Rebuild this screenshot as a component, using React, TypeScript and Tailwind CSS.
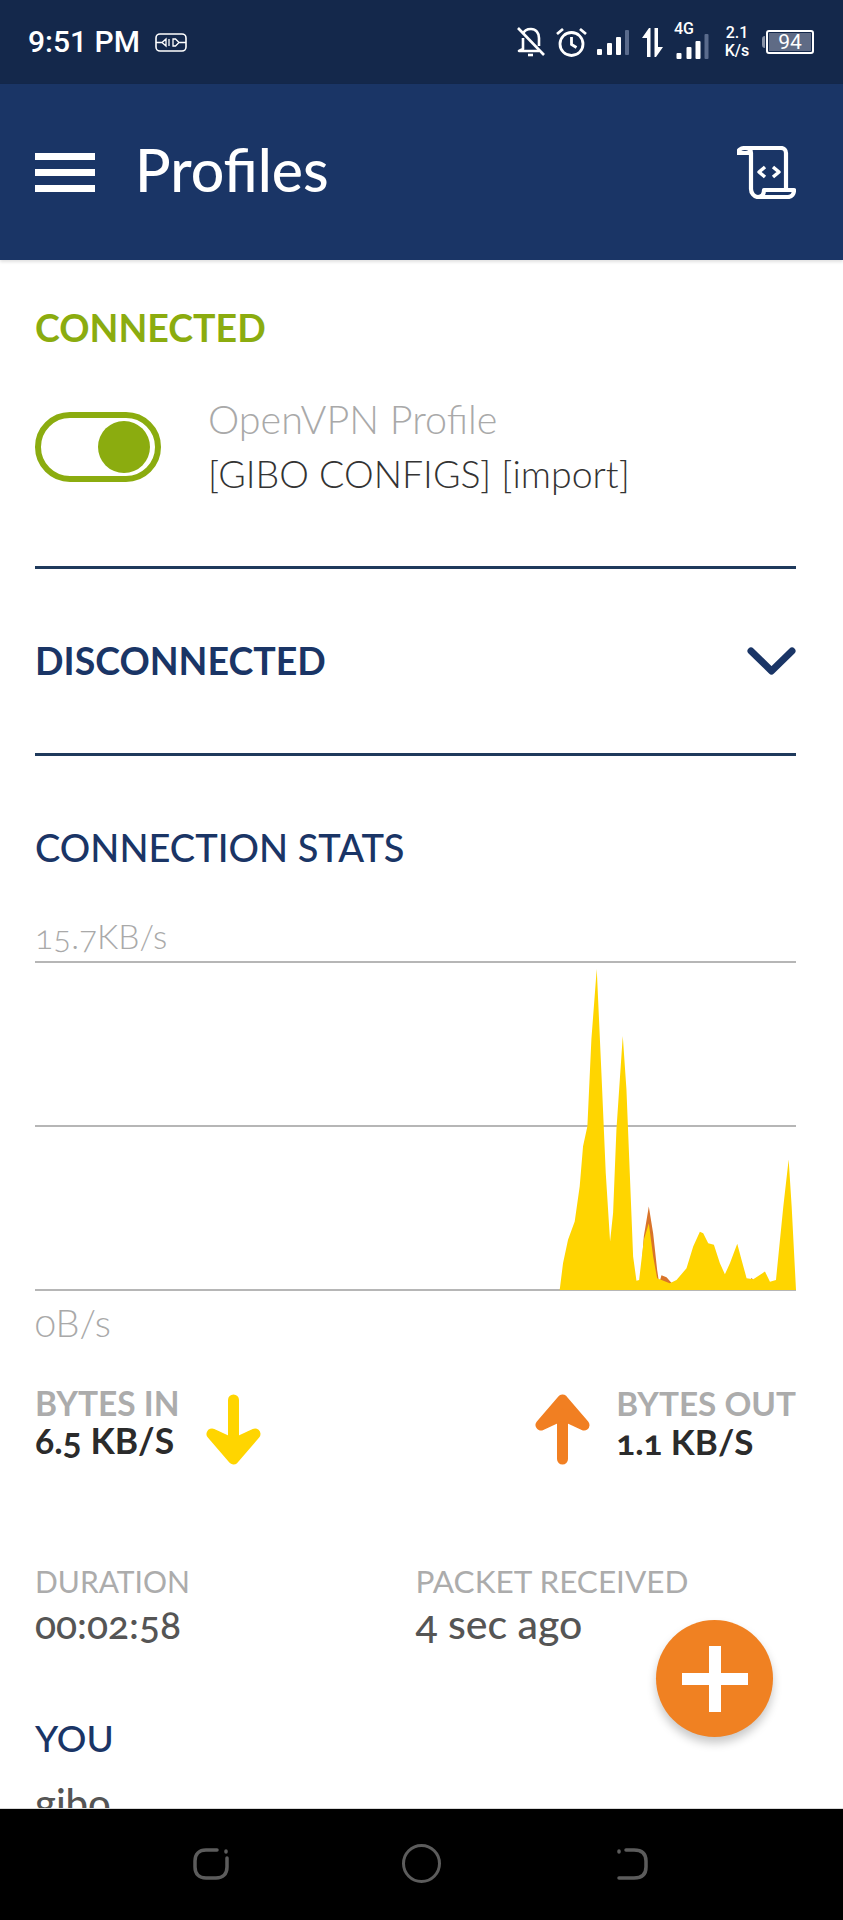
const yellowPts = '120,1050 130,970 145,900 165,845 180,740 190,620 203,560 215,300 231,90 245,400 258,700 271,905 280,820 290,570 309,290 320,450 330,700 340,950 350,1022 358,1020 372,900 387,850 400,950 412,1015 425,1020 450,1030 470,1020 500,985 520,920 540,876 550,880 565,910 582,915 600,970 615,1003 630,970 652,912 665,960 680,1015 700,1018 735,995 750,1025 768,1020 790,800 806,660 815,800 828,1050'
const orangePts = '362,1030 372,890 387,800 400,880 412,990 418,1030 425,1006 440,1012 458,1032 680,1030 685,1028 695,1014 710,1030 362,1040'

function SignalBars({ className }: { className?: string }) {
  return (
    <svg viewBox="0 0 32 25" className={className} fill="#fff">
      <rect x="0" y="19" width="5" height="6" rx="1" />
      <rect x="10" y="13" width="5" height="12" rx="1" />
      <rect x="19" y="7" width="5" height="18" rx="1" />
      <rect x="28" y="0" width="4" height="25" rx="1" fill="#5a6b8c" />
    </svg>
  )
}

function StatusBar() {
  return (
    <div className="h-[84px] shrink-0 bg-[#14284b] flex items-center pl-[28px] pr-[29px] text-white font-['Roboto',sans-serif]">
      <span className="text-[30px] leading-none font-medium">9:51 PM</span>
      <svg viewBox="0 0 32 19" className="w-[32px] h-[19px] ml-[15px]" fill="none" stroke="#fff" strokeWidth="1.6">
        <rect x="1" y="1" width="30" height="17" rx="4" />
        <path d="M1 9.5h6l4-3.500v7l-4-3.500M14 6v7M18 6h2.500l3.500 3.500-3.500 3.500H18zM24 9.500h7" strokeWidth="1.300" />
      </svg>
      <div className="ml-auto flex items-center">
        <svg viewBox="0 0 28 30" className="w-[28px] h-[30px]" fill="none" stroke="#fff" strokeWidth="2.600">
          <path d="M6 7C7 4 10 2 14 2c5 0 8 4 8 9v8M6 11v11l-4 2h20" strokeLinejoin="round" />
          <path d="M1 1l26 27" />
          <path d="M11 28h5" />
        </svg>
        <svg viewBox="0 0 33 30" className="w-[33px] h-[30px] ml-[10px]" fill="none" stroke="#fff" strokeWidth="2.800">
          <circle cx="16.500" cy="17" r="11.500" />
          <path d="M16.500 10v7.500l5 3M2 7l6-5M31 7l-6-5" />
        </svg>
        <SignalBars className="w-[32px] h-[25px] ml-[9px]" />
        <svg viewBox="0 0 21 29" className="w-[21px] h-[29px] ml-[13px]" fill="#fff">
          <path d="M0 10L7 0h1.500v29H5V10z" />
          <path d="M21 19L14 29h-1.500V0H16v19z" />
        </svg>
        <div className="relative w-[36px] h-[33px] ml-[10px] flex items-end justify-end">
          <span className="absolute left-[1px] top-[-5px] text-[16px] leading-none font-medium">4G</span>
          <SignalBars className="w-[33px] h-[25px]" />
        </div>
        <div className="w-[26px] ml-[15px] flex flex-col items-center text-[16px] leading-[18px] font-medium">
          <span>2.1</span>
          <span>K/s</span>
        </div>
        <div className="flex items-center ml-[12px]">
          <div className="w-[3px] h-[12px] bg-[#8a94a8] rounded-l-sm mr-[1px]" />
          <div className="w-[48px] h-[24px] border-2 border-white rounded-[3px] p-[1px] flex">
            <div className="w-full bg-[#5f6b85] flex items-center justify-center text-[21px] leading-none">94</div>
          </div>
        </div>
      </div>
    </div>
  )
}

function Header() {
  return (
    <div className="h-[176px] shrink-0 bg-[#1a3566] flex items-center pl-[35px] pr-[47px] text-white shadow-[0_2px_3px_rgba(0,0,0,0.12)] z-10">
      <div className="w-[60px] flex flex-col gap-[9px]">
        <div className="h-[7px] bg-white" />
        <div className="h-[7px] bg-white" />
        <div className="h-[7px] bg-white" />
      </div>
      <h1 className="ml-[40px] pb-[5px] text-[59px] leading-none font-medium font-['Lato',sans-serif]">Profiles</h1>
      <svg viewBox="0 0 59 53" className="ml-auto w-[59px] h-[53px]" fill="none" stroke="#fff" strokeWidth="4.200" strokeLinejoin="round">
        <path d="M8 2h36c3 0 5 2 5 5v35" />
        <path d="M1 7c0-3 3-5 7-5s6 2 6 5zM14 7v36c0 4 3 8 7 8h30c4 0 6-3 6-7H27c0 4-2 7-6 7" />
        <path d="M28 21l-6 5 6 5M36 21l6 5-6 5" strokeWidth="3.500" />
      </svg>
    </div>
  )
}

function Chart() {
  return (
    <div className="relative h-[330px] mt-[5px] flex flex-col justify-between">
      <div className="h-[2px] bg-[#b6b6b6]" />
      <div className="h-[2px] bg-[#b6b6b6]" />
      <div className="h-[2px] bg-[#b6b6b6]" />
      <svg viewBox="-1452 69 2280 981" preserveAspectRatio="none" className="absolute left-0 top-[1px] w-[761px] h-[328px]">
        <polygon points={orangePts} fill="#d9742a" />
        <polygon points={yellowPts} fill="#ffd500" />
      </svg>
    </div>
  )
}

function DownArrow() {
  return (
    <svg viewBox="0 0 57 71" className="w-[57px] h-[71px] ml-[25px] mt-[11px]" fill="#ffd500" stroke="#ffd500" strokeWidth="11" strokeLinecap="round" strokeLinejoin="round">
      <path d="M28.500 6v50" />
      <path d="M7 40l21.500 25L50 40 28.500 50z" />
    </svg>
  )
}

function UpArrow() {
  return (
    <svg viewBox="0 0 57 71" className="w-[57px] h-[71px] ml-auto mt-[11px]" fill="#f17f22" stroke="#f17f22" strokeWidth="11" strokeLinecap="round" strokeLinejoin="round">
      <path d="M28.500 65V15" />
      <path d="M7 31L28.500 6 50 31 28.500 21z" />
    </svg>
  )
}

export default function App() {
  return (
    <div className="relative w-[843px] h-[1920px] flex flex-col overflow-hidden bg-white font-['Lato',sans-serif]">
      <StatusBar />
      <Header />

      <main className="flex-1 overflow-hidden pl-[35px] pr-[47px] oldstyle-nums">
        <h2 className="mt-[48px] text-[37.500px] leading-[40px] font-bold text-[#8bac0f]">CONNECTED</h2>

        <div className="mt-[44px] h-[110px] flex items-center">
          <div className="w-[126px] h-[70px] rounded-full border-[6px] border-[#8bac0f] flex items-center justify-end pr-[5px]">
            <div className="w-[52px] h-[52px] rounded-full bg-[#8bac0f]" />
          </div>
          <div className="ml-[47px] pb-[2px] leading-[55px] font-light">
            <p className="text-[39.500px] text-[#a9a9a9]">OpenVPN Profile</p>
            <p className="text-[37.500px] text-[#333]">[GIBO CONFIGS] [import]</p>
          </div>
        </div>

        <div className="mt-[64px] h-[3px] bg-[#1f3a5c]" />

        <div className="mt-[72px] h-[40px] flex items-center justify-between">
          <h2 className="text-[37.500px] leading-[40px] font-bold text-[#1a3566]">DISCONNECTED</h2>
          <svg viewBox="0 0 49 28" className="w-[49px] h-[28px]" fill="none" stroke="#1a3566" strokeWidth="7" strokeLinecap="round" strokeLinejoin="round">
            <path d="M4 4l20.500 20L45 4" />
          </svg>
        </div>

        <div className="mt-[72px] h-[3px] bg-[#1f3a5c]" />

        <h2 className="mt-[71px] text-[38px] leading-[40px] font-medium text-[#1a3566]">CONNECTION STATS</h2>

        <p className="mt-[49px] text-[33.500px] leading-[40px] font-light text-[#a9a9a9]">15.7KB/s</p>
        <Chart />
        <p className="mt-[11px] text-[38px] leading-[40px] font-light text-[#a9a9a9]">0B/s</p>

        <div className="mt-[41px] h-[80px] flex">
          <div>
            <p className="text-[33.500px] leading-[40px] font-bold text-[#acacac]">BYTES IN</p>
            <p className="text-[35.500px] leading-[36px] font-bold text-[#2b2b2b]">6.5 KB/S</p>
          </div>
          <DownArrow />
          <UpArrow />
          <div className="ml-[25px]">
            <p className="text-[33.300px] leading-[40px] font-bold text-[#acacac]">BYTES OUT</p>
            <p className="text-[35px] leading-[36px] font-bold text-[#2b2b2b]">1.1 KB/S</p>
          </div>
        </div>

        <div className="mt-[98px] grid grid-cols-2">
          <div>
            <p className="text-[30px] leading-[40px] text-[#acacac]">DURATION</p>
            <p className="mt-[3px] text-[39px] leading-[40px] font-medium text-[#555]">00:02:58</p>
          </div>
          <div>
            <p className="text-[31.500px] leading-[40px] text-[#acacac]">PACKET RECEIVED</p>
            <p className="mt-[3px] text-[41px] leading-[40px] font-medium text-[#555]">4 sec ago</p>
          </div>
        </div>

        <h2 className="mt-[74px] text-[37px] leading-[40px] font-medium text-[#1a3566]">YOU</h2>
        <p className="mt-[25px] text-[40px] leading-[40px] font-medium text-[#555]">gibo</p>
      </main>

      <div className="h-[112px] shrink-0 bg-black border-t border-[#d8d8d8]">
        <svg viewBox="0 0 36 32" className="absolute left-[193px] top-[1848px] w-[36px] h-[32px]" fill="none" stroke="#5c5c5c" strokeWidth="3.500" strokeLinecap="round">
          <path d="M24 2H13C6 2 2 6 2 13v6c0 7 4 11 11 11h10c7 0 11-4 11-11V10" />
          <path d="M33 3v1" />
        </svg>
        <div className="absolute left-[402px] top-[1844px] w-[39px] h-[39px] rounded-full border-[3px] border-[#5c5c5c]" />
        <svg viewBox="0 0 31 32" className="absolute left-[617px] top-[1848px] w-[31px] h-[32px]" fill="none" stroke="#5c5c5c" strokeWidth="3.500" strokeLinecap="round">
          <path d="M9 2h8c8 0 12 4 12 11v6c0 7-4 11-12 11H2" />
          <path d="M2 3v1" />
        </svg>
      </div>

      <button className="absolute left-[656px] top-[1620px] w-[117px] h-[117px] rounded-full bg-[#f08122] shadow-[0_6px_10px_rgba(0,0,0,0.22)] flex items-center justify-center">
        <svg viewBox="0 0 66 66" className="w-[66px] h-[66px]" fill="#fff">
          <rect x="27" y="0" width="12" height="66" />
          <rect x="0" y="27" width="66" height="12" />
        </svg>
      </button>
    </div>
  )
}
